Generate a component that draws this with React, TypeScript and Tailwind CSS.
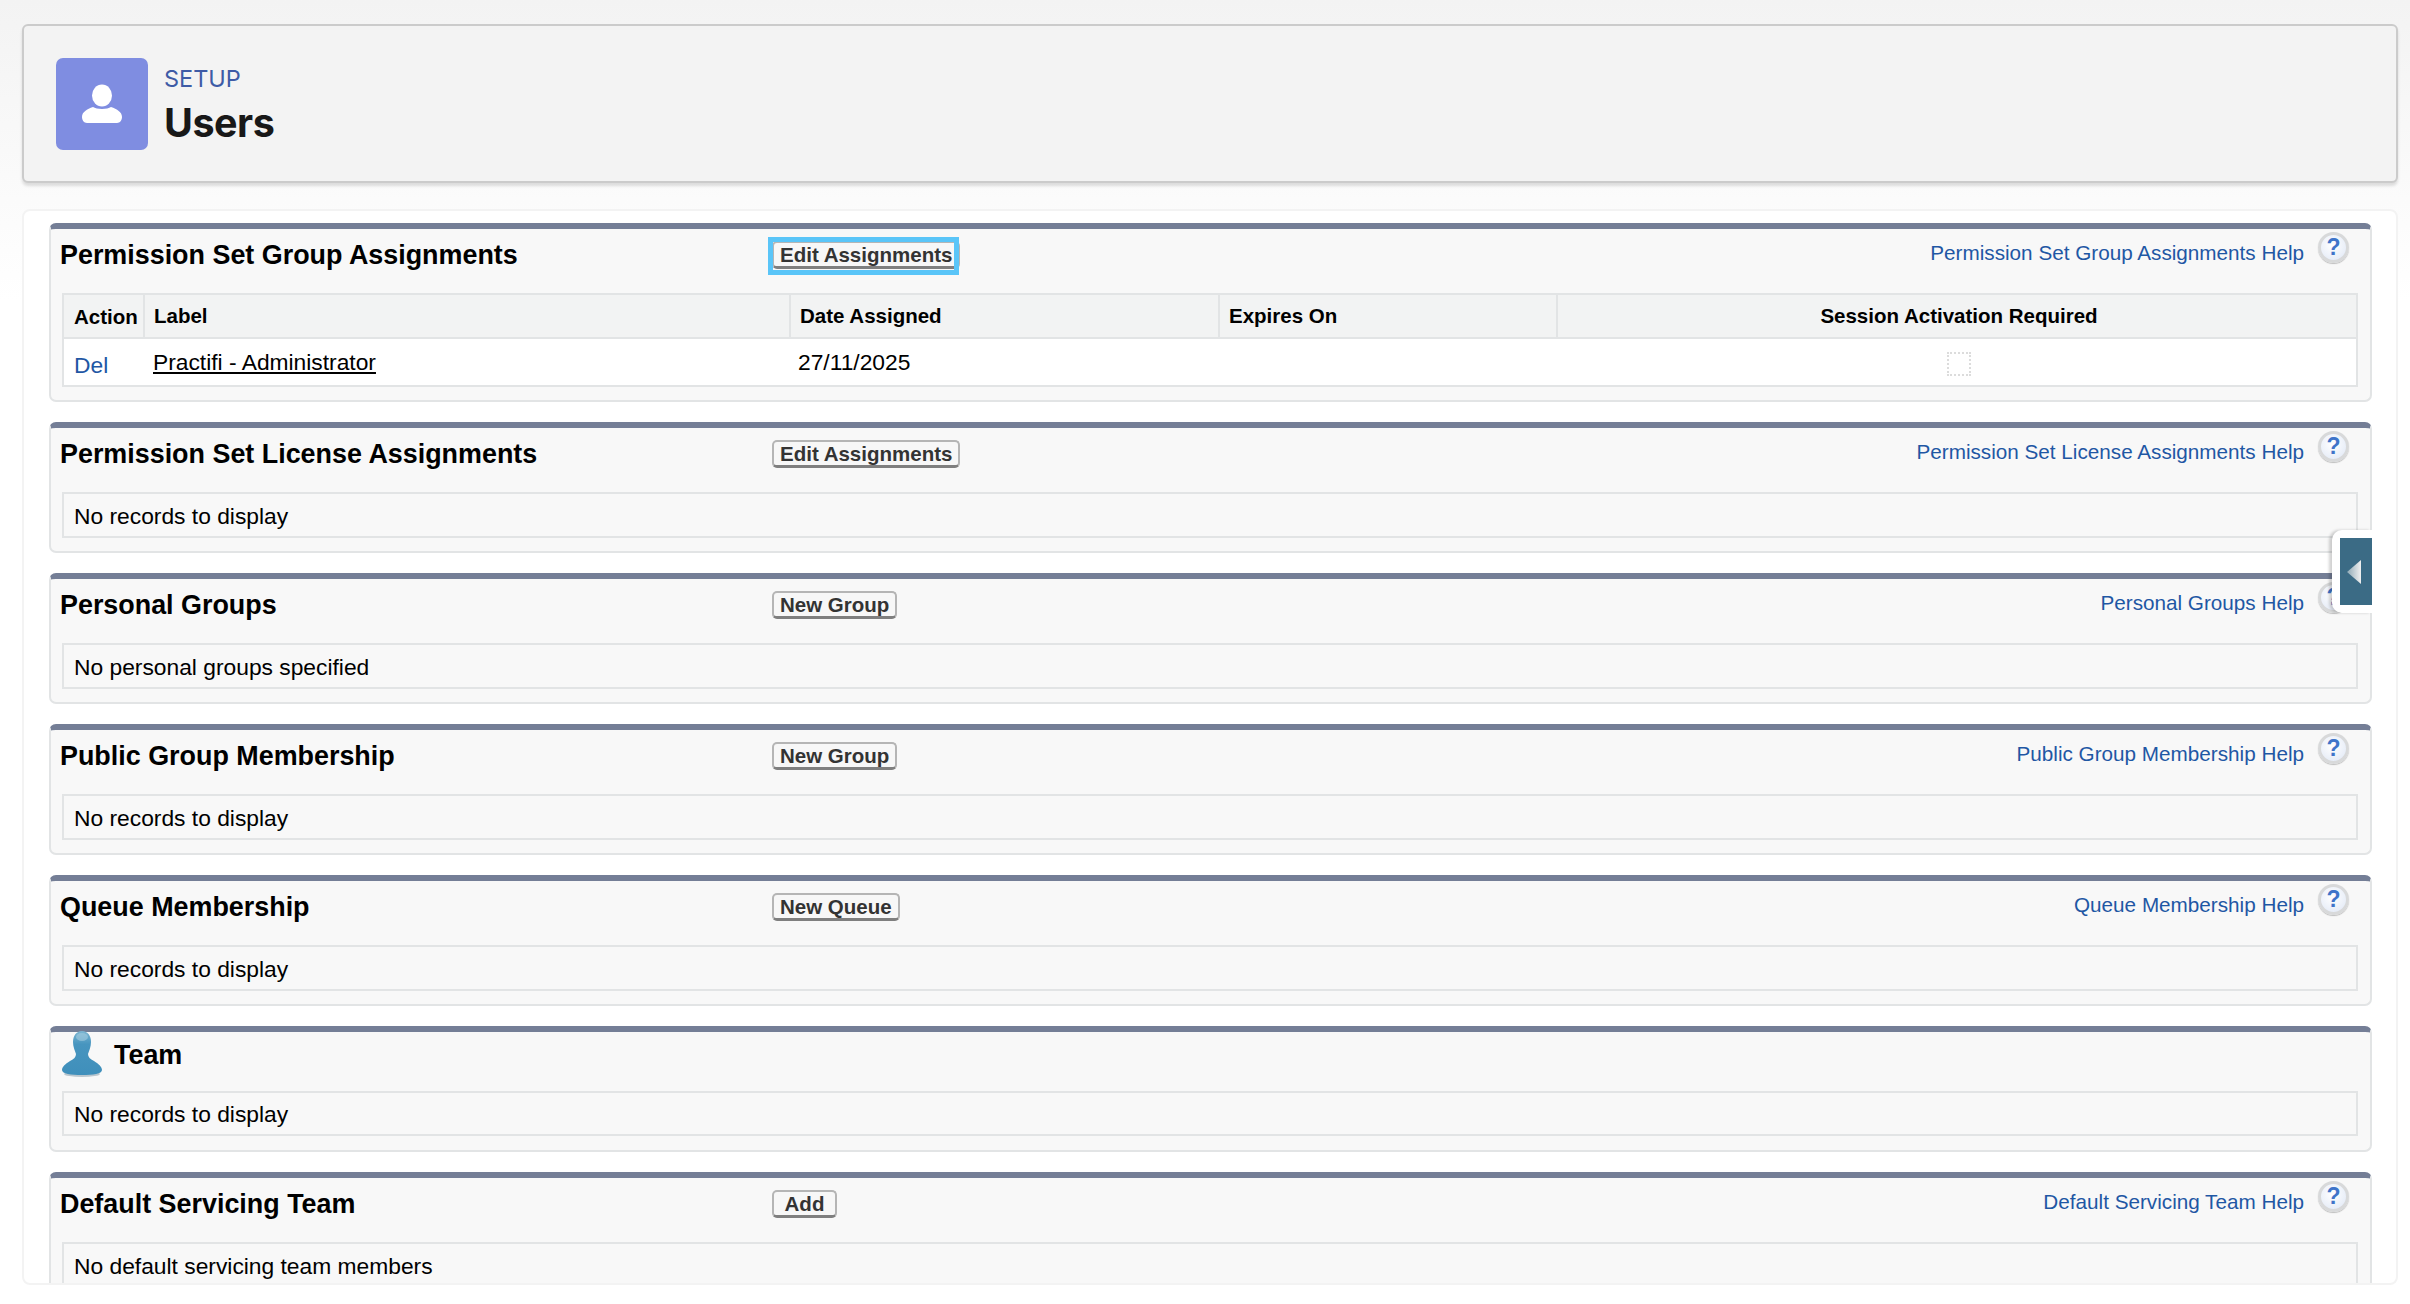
import React from 'react';

const HelpIcon: React.FC = () => (
  <span className="mt-[3px] ml-[14px] flex h-[31px] w-[31px] shrink-0 items-center justify-center rounded-full border-[3px] border-[#d8d9da] bg-[radial-gradient(circle_at_45%_40%,#ffffff,#dfe7f5)] font-['Liberation_Sans',sans-serif] text-[23px] font-bold leading-none text-[#3f74c9] shadow-[0_1px_1px_#bdbdbd]">
    ?
  </span>
);

const Btn: React.FC<{ label: string; focused?: boolean }> = ({ label, focused }) => (
  <div className="relative">
    <button className="flex h-[28px] min-w-[65px] items-center justify-center rounded-[5px] border-x-2 border-t-2 border-b-[3px] border-[#b5b5b5] border-b-[#7f7f7f] bg-[#f7f7f7] px-[6px] pt-[1px] text-[20.5px] font-bold leading-none text-[#333]">
      {label}
    </button>
    {focused && <span className="absolute top-[-4px] left-[-4px] h-[38px] w-[191px] border-[5px] border-[#5ac5f8]" />}
  </div>
);

const Section: React.FC<{
  title: string;
  button?: string;
  help?: string;
  focused?: boolean;
  children: React.ReactNode;
}> = ({ title, button, help, focused, children }) => (
  <section className="mb-[20px] rounded-[7px] border-x-2 border-b-2 border-t-[6px] border-[#e2e4e5] border-t-[#747e96] bg-[#f8f8f8] pb-[13px]">
    <div className="flex h-[64px] items-start">
      <h3 className="mt-[9px] w-[721px] shrink-0 pl-[9px] text-[26.9px] font-bold leading-[34px] text-black">{title}</h3>
      {button && (
        <div className="mt-[12px]">
          <Btn label={button} focused={focused} />
        </div>
      )}
      <div className="ml-auto flex items-start pr-[21px]">
        <a className="mt-[12px] text-[20.7px] leading-[24px] text-[#1f57a4]">{help}</a>
        <HelpIcon />
      </div>
    </div>
    {children}
  </section>
);

const Empty: React.FC<{ text: string }> = ({ text }) => (
  <div className="mr-[12px] ml-[11px] flex h-[46px] items-center border-2 border-[#e2e4e5] pt-[2px] pl-[10px] text-[22.8px] text-black">{text}</div>
);

const TeamSection: React.FC = () => (
  <section className="mb-[20px] rounded-[7px] border-x-2 border-b-2 border-t-[6px] border-[#e2e4e5] border-t-[#747e96] bg-[#f8f8f8] pb-[14px]">
    <div className="flex h-[59px] items-start pl-[11px]">
      <svg width="40" height="46" viewBox="0 0 40 46" className="mt-[-1px] shrink-0">
        <defs>
          <linearGradient id="teamFill" x1="0" y1="0" x2="0" y2="1">
            <stop offset="0" stopColor="#7db6d2" />
            <stop offset="0.3" stopColor="#4795bf" />
            <stop offset="1" stopColor="#3f8fbb" />
          </linearGradient>
        </defs>
        <ellipse cx="20" cy="43" rx="18" ry="3" fill="#b9c6ce" />
        <path
          d="M20 0c6 0 9 5 9 11 0 5-2 9-3 12 0 3 2 5 6 7 5 3 8 6 8 9 0 4-9 5-20 5S0 43 0 39c0-3 3-6 8-9 4-2 6-4 6-7-1-3-3-7-3-12 0-6 3-11 9-11z"
          fill="url(#teamFill)"
        />
        <ellipse cx="20" cy="6" rx="6" ry="4" fill="#a5cde0" opacity="0.6" />
      </svg>
      <h3 className="mt-[6px] ml-[12px] text-[26.9px] font-bold leading-[34px] text-black">Team</h3>
    </div>
    <div className="mr-[12px] ml-[11px] flex h-[45px] items-center border-2 border-[#e2e4e5] pt-[2px] pl-[10px] text-[22.8px] text-black">No records to display</div>
  </section>
);

const AssignmentsTable: React.FC = () => (
  <table className="ml-[11px] w-[2296px] table-fixed border-collapse border-2 border-[#e2e4e5] bg-white text-black">
    <colgroup>
      <col className="w-[81px]" />
      <col className="w-[646px]" />
      <col className="w-[429px]" />
      <col className="w-[338px]" />
      <col />
    </colgroup>
    <thead>
      <tr className="h-[44px] bg-[#f2f3f3] text-[20.5px]">
        <th className="border-2 border-[#e2e4e5] pt-[2px] pl-[10px] text-left font-bold">Action</th>
        <th className="border-2 border-[#e2e4e5] pl-[9px] text-left font-bold">Label</th>
        <th className="border-2 border-[#e2e4e5] pl-[9px] text-left font-bold">Date Assigned</th>
        <th className="border-2 border-[#e2e4e5] pl-[9px] text-left font-bold">Expires On</th>
        <th className="border-2 border-[#e2e4e5] pl-[4px] text-center font-bold">Session Activation Required</th>
      </tr>
    </thead>
    <tbody>
      <tr className="h-[48px] text-[22.8px]">
        <td className="pt-[6px] pl-[10px] text-[#1f57a4]">Del</td>
        <td className="pl-[9px]"><span className="underline">Practifi - Administrator</span></td>
        <td className="pl-[8px]">27/11/2025</td>
        <td />
        <td className="pl-[4px]">
          <div className="mx-auto mt-[3px] h-[24px] w-[24px] border-2 border-dotted border-[#dcdcdc]" />
        </td>
      </tr>
    </tbody>
  </table>
);

const App: React.FC = () => {
  return (
    <div className="relative h-[1304px] w-[2410px] overflow-hidden bg-[linear-gradient(#f3f3f3,#ffffff_300px)] pt-[24px] pl-[22px] font-['Liberation_Sans',Arial,sans-serif]">
      {/* Page header */}
      <header className="flex h-[159px] w-[2376px] items-start rounded-[6px] border-2 border-[#cbcbcb] bg-[#f3f3f3] pt-[32px] pl-[32px] shadow-[0_3px_3px_rgba(0,0,0,0.12)]">
        <div className="h-[92px] w-[92px] shrink-0 rounded-[7px] bg-[#7f8de1]">
          <svg width="92" height="92" viewBox="0 0 92 92">
            <ellipse cx="46" cy="37.5" rx="10" ry="11" fill="#fff" />
            <path d="M26 59c0-5 5-8 11-10 2 1 5 2 9 2s7-1 9-2c6 2 11 5 11 10 0 3-2 6-5 6H31c-3 0-5-3-5-6z" fill="#fff" />
          </svg>
        </div>
        <div className="ml-[16px] font-['Inter',sans-serif]">
          <p className="mt-[7px] text-[23.5px] leading-[28px] text-[#3e5ba6]">SETUP</p>
          <h1 className="mt-[6px] text-[39.5px] font-bold leading-[48px] tracking-[-0.5px] text-[#181818]">Users</h1>
        </div>
      </header>

      {/* Related lists */}
      <main className="mt-[26px] h-[1076px] w-[2376px] overflow-hidden rounded-[8px] border-2 border-[#f3f3f3] bg-white pt-[12px] pr-[24px] pl-[25px]">
        <Section title="Permission Set Group Assignments" button="Edit Assignments" help="Permission Set Group Assignments Help" focused>
          <AssignmentsTable />
        </Section>
        <Section title="Permission Set License Assignments" button="Edit Assignments" help="Permission Set License Assignments Help">
          <Empty text="No records to display" />
        </Section>
        <Section title="Personal Groups" button="New Group" help="Personal Groups Help">
          <Empty text="No personal groups specified" />
        </Section>
        <Section title="Public Group Membership" button="New Group" help="Public Group Membership Help">
          <Empty text="No records to display" />
        </Section>
        <Section title="Queue Membership" button="New Queue" help="Queue Membership Help">
          <Empty text="No records to display" />
        </Section>
        <TeamSection />
        <Section title="Default Servicing Team" button="Add" help="Default Servicing Team Help">
          <Empty text="No default servicing team members" />
        </Section>
      </main>

      {/* Collapsed side tab */}
      <div className="absolute top-[530px] left-[2332px] h-[83px] w-[40px] rounded-l-[10px] bg-white py-[8px] pl-[8px] shadow-[-3px_0_3px_rgba(0,0,0,0.18)]">
        <div className="flex h-full items-center bg-[#3b6b85] pl-[6px]">
          <svg width="16" height="26" viewBox="0 0 16 26">
            <defs>
              <linearGradient id="tabArrow" x1="0" y1="0" x2="1" y2="0">
                <stop offset="0" stopColor="#8fa9b6" />
                <stop offset="1" stopColor="#f0f0f0" />
              </linearGradient>
            </defs>
            <path d="M15 1v24L1 13z" fill="url(#tabArrow)" />
          </svg>
        </div>
      </div>
    </div>
  );
};

export default App;
